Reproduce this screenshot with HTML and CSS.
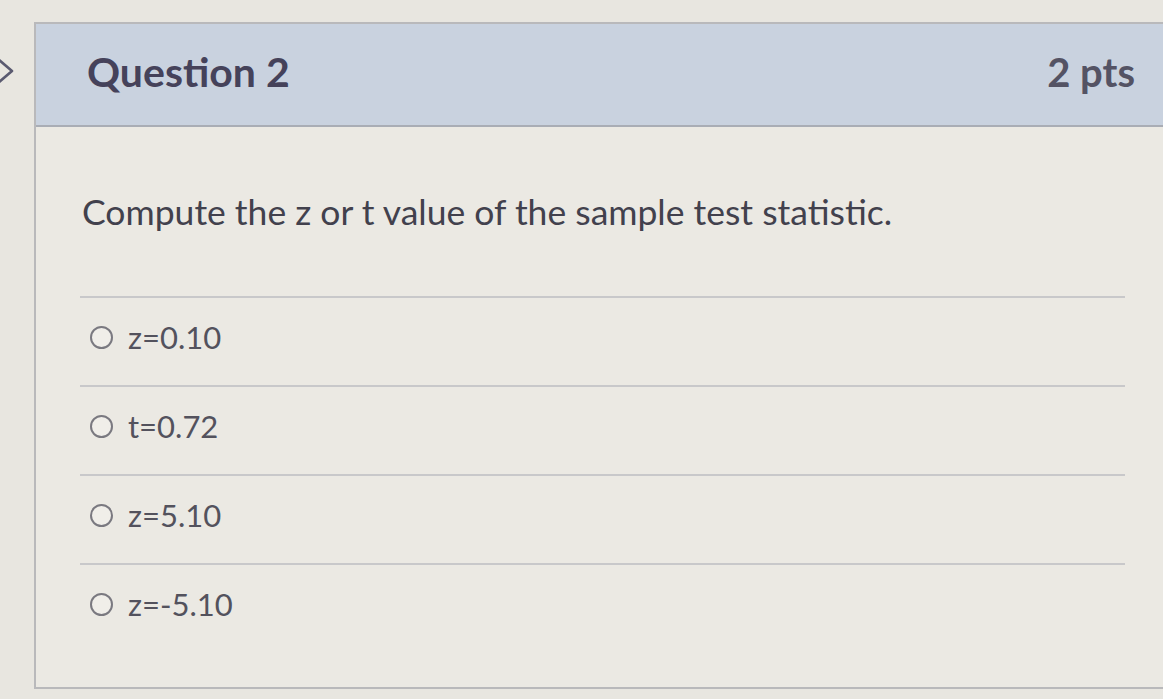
FILE: index.html
```html
<!DOCTYPE html>
<html>
<head>
<meta charset="utf-8">
<link rel="stylesheet" href="styles.css">
</head>
<body>
<div class="page">
  <div class="side">
    <svg class="chev" width="22" height="30" viewBox="0 0 22 30"><path d="M3 3 L17 15 L3 27" fill="none" stroke="#5a5a70" stroke-width="2.6" stroke-linejoin="round" stroke-linecap="round"/></svg>
  </div>
  <div class="card">
    <div class="header">
      <span class="title">Question 2</span>
      <span class="pts">2 pts</span>
    </div>
    <div class="body">
      <p class="question">Compute the z or t value of the sample test statistic.</p>
      <div class="answers">
        <label class="answer"><span class="radio"></span><span class="txt">z=0.10</span></label>
        <label class="answer"><span class="radio"></span><span class="txt">t=0.72</span></label>
        <label class="answer"><span class="radio"></span><span class="txt">z=5.10</span></label>
        <label class="answer"><span class="radio"></span><span class="txt">z=-5.10</span></label>
      </div>
    </div>
  </div>
</div>
</body>
</html>
```
FILE: styles.css
```css
html, body {
  margin: 0;
  padding: 0;
  background: #e8e6e0;
  font-family: Lato, "Liberation Sans", sans-serif;
  overflow: hidden;
}
.page {
  display: flex;
  width: 1163px;
  height: 699px;
  padding-top: 22px;
  box-sizing: border-box;
}
.side {
  width: 34px;
  flex: none;
  position: relative;
}
.chev {
  position: absolute;
  left: -5px;
  top: 34px;
}
.card {
  flex: 1;
  margin-right: -40px;
  height: 667px;
  border: 2px solid #b9b9bb;
  border-right: none;
  background: #ebe9e3;
  display: flex;
  flex-direction: column;
  box-sizing: border-box;
}
.header {
  height: 103px;
  background: #c9d2df;
  border-bottom: 2px solid #a9adb5;
  display: flex;
  align-items: center;
  justify-content: space-between;
  padding: 0 68px 6px 51px;
  box-sizing: border-box;
}
.title {
  font-size: 41px;
  font-weight: 700;
  color: #45425a;
}
.pts {
  font-size: 40px;
  font-weight: 700;
  color: #545364;
}
.body {
  padding: 58px 78px 0 44px;
}
.question {
  margin: 0 0 57px 2px;
  font-size: 35.5px;
  color: #42414d;
  line-height: 54px;
}
.answers {
  display: flex;
  flex-direction: column;
}
.answer {
  display: flex;
  align-items: center;
  gap: 15px;
  height: 89px;
  border-top: 2px solid #c8c8ca;
  padding-left: 10px;
  padding-bottom: 9px;
  box-sizing: border-box;
}
.radio {
  width: 23px;
  height: 23px;
  border: 2px solid #7a7980;
  border-radius: 50%;
  box-sizing: border-box;
  background: #f0eee9;
}
.txt {
  font-size: 31px;
  color: #53525d;
}
```
